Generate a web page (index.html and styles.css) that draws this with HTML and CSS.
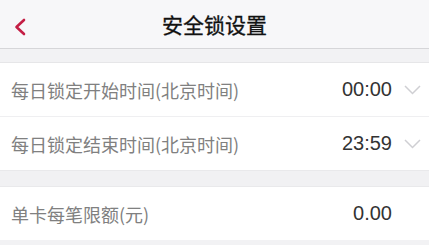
FILE: index.html
```html
<!DOCTYPE html>
<html lang="zh-CN">
<head>
<meta charset="utf-8">
<title>安全锁设置</title>
<link rel="stylesheet" href="styles.css">
</head>
<body>
<header class="nav">
  <div class="back">
    <svg width="14" height="18" viewBox="0 0 14 18"><path d="M11 2 L3.5 9 L11 16" fill="none" stroke="#c41e45" stroke-width="2.6" stroke-linecap="round" stroke-linejoin="round"/></svg>
  </div>
  <h1 class="title">安全锁设置</h1>
  <div></div>
</header>
<div class="gap"></div>
<section class="group">
  <div class="row">
    <span class="label">每日锁定开始时间(北京时间)</span>
    <span class="value">00:00</span>
    <span class="arrow"><svg width="17" height="10" viewBox="0 0 17 10"><path d="M1 1 L8.5 8.5 L16 1" fill="none" stroke="#cfcfd3" stroke-width="1.5"/></svg></span>
  </div>
  <div class="row">
    <span class="label">每日锁定结束时间(北京时间)</span>
    <span class="value">23:59</span>
    <span class="arrow"><svg width="17" height="10" viewBox="0 0 17 10"><path d="M1 1 L8.5 8.5 L16 1" fill="none" stroke="#cfcfd3" stroke-width="1.5"/></svg></span>
  </div>
</section>
<div class="gap2"></div>
<section class="group">
  <div class="row">
    <span class="label">单卡每笔限额(元)</span>
    <span class="value">0.00</span>
    <span class="arrow"></span>
  </div>
</section>
</body>
</html>
```
FILE: styles.css
```css
html, body {
  margin: 0;
  padding: 0;
  background: #f2f2f4;
  font-family: "Noto Sans CJK SC", "Noto Sans", sans-serif;
}
.nav {
  height: 48px;
  background: #f7f7f9;
  border-bottom: 1px solid #d6d6d9;
  display: grid;
  grid-template-columns: 48px 1fr 48px;
  align-items: center;
}
.back {
  display: flex;
  align-items: center;
  padding-left: 13px;
  padding-top: 5px;
}
.title {
  margin: 0;
  text-align: center;
  font-size: 21px;
  font-weight: 400;
  color: #111;
  line-height: 1;
  -webkit-text-stroke: 0.3px #111;
}
.gap {
  height: 13px;
  border-bottom: 1px solid #e6e6e8;
}
.gap2 {
  height: 15px;
  border-top: 1px solid #e9e9eb;
  border-bottom: 1px solid #e9e9eb;
  background: #f1f1f3;
}
.group {
  background: #fff;
}
.row {
  height: 53px;
  display: flex;
  align-items: center;
  padding: 0 8px 0 11px;
}
.row + .row {
  border-top: 1px solid #efeff1;
}
.label {
  flex: 1;
  font-size: 18px;
  color: #808080;
}
.value {
  font-family: "Liberation Sans", Arial, sans-serif;
  font-size: 20px;
  color: #333;
}
.arrow {
  width: 17px;
  margin-left: 12px;
  display: flex;
  align-items: center;
}
```
